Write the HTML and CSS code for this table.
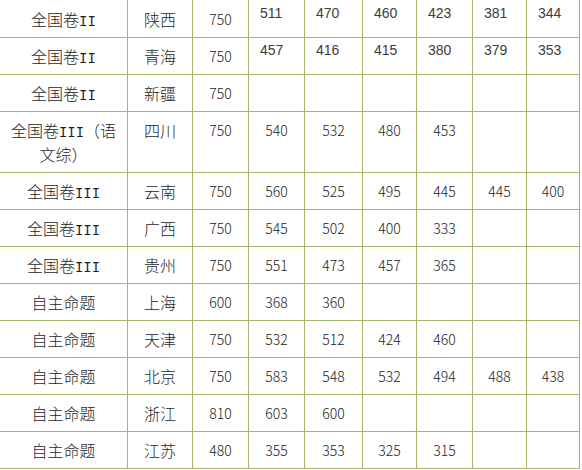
FILE: index.html
```html
<!DOCTYPE html>
<html lang="zh-CN">
<head>
<meta charset="utf-8">
<title>分数线</title>
<link rel="stylesheet" href="styles.css">
</head>
<body>
<table class="score">
  <colgroup>
    <col class="w1"><col class="w2"><col class="w3"><col class="w4"><col class="w5"><col class="w6"><col class="w7"><col class="w8"><col class="w9">
  </colgroup>
  <tbody>
    <tr class="first">
      <td>全国卷<span class="lat">II</span></td><td>陕西</td><td class="n">750</td>
      <td class="a">511</td><td class="a">470</td><td class="a">460</td><td class="a">423</td><td class="a">381</td><td class="a">344</td>
    </tr>
    <tr>
      <td>全国卷<span class="lat">II</span></td><td>青海</td><td class="n">750</td>
      <td class="a">457</td><td class="a">416</td><td class="a">415</td><td class="a">380</td><td class="a">379</td><td class="a">353</td>
    </tr>
    <tr>
      <td>全国卷<span class="lat">II</span></td><td>新疆</td><td class="n">750</td>
      <td></td><td></td><td></td><td></td><td></td><td></td>
    </tr>
    <tr>
      <td>全国卷<span class="lat">III</span>（语文综）</td><td>四川</td><td class="n">750</td>
      <td class="n">540</td><td class="n">532</td><td class="n">480</td><td class="n">453</td><td></td><td></td>
    </tr>
    <tr>
      <td>全国卷<span class="lat">III</span></td><td>云南</td><td class="n">750</td>
      <td class="n">560</td><td class="n">525</td><td class="n">495</td><td class="n">445</td><td class="n">445</td><td class="n">400</td>
    </tr>
    <tr>
      <td>全国卷<span class="lat">III</span></td><td>广西</td><td class="n">750</td>
      <td class="n">545</td><td class="n">502</td><td class="n">400</td><td class="n">333</td><td></td><td></td>
    </tr>
    <tr>
      <td>全国卷<span class="lat">III</span></td><td>贵州</td><td class="n">750</td>
      <td class="n">551</td><td class="n">473</td><td class="n">457</td><td class="n">365</td><td></td><td></td>
    </tr>
    <tr>
      <td>自主命题</td><td>上海</td><td class="n">600</td>
      <td class="n">368</td><td class="n">360</td><td></td><td></td><td></td><td></td>
    </tr>
    <tr>
      <td>自主命题</td><td>天津</td><td class="n">750</td>
      <td class="n">532</td><td class="n">512</td><td class="n">424</td><td class="n">460</td><td></td><td></td>
    </tr>
    <tr>
      <td>自主命题</td><td>北京</td><td class="n">750</td>
      <td class="n">583</td><td class="n">548</td><td class="n">532</td><td class="n">494</td><td class="n">488</td><td class="n">438</td>
    </tr>
    <tr>
      <td>自主命题</td><td>浙江</td><td class="n">810</td>
      <td class="n">603</td><td class="n">600</td><td></td><td></td><td></td><td></td>
    </tr>
    <tr>
      <td>自主命题</td><td>江苏</td><td class="n">480</td>
      <td class="n">355</td><td class="n">353</td><td class="n">325</td><td class="n">315</td><td></td><td></td>
    </tr>
  </tbody>
</table>
</body>
</html>
```
FILE: styles.css
```css
html, body {
  margin: 0;
  padding: 0;
  background: #ffffff;
}

.score {
  border-collapse: collapse;
  table-layout: fixed;
  width: 581px;
  margin: -1px 0 0 -1px;
}

.w1 { width: 128px; }
.w2 { width: 65px; }
.w3 { width: 56px; }
.w4 { width: 56px; }
.w5 { width: 58px; }
.w6 { width: 54px; }
.w7 { width: 56px; }
.w8 { width: 54px; }
.w9 { width: 53px; }

.score td {
  border: 1px solid #a3b96a;
  padding: 6px 8px;
  line-height: 24px;
  font-family: "Noto Sans CJK SC", sans-serif;
  font-weight: 300;
  font-size: 16px;
  color: #1e1e1e;
  text-align: center;
  vertical-align: top;
  overflow: hidden;
}

.score .first td {
  padding-top: 7px;
}

.lat {
  font-family: "Liberation Mono", "DejaVu Sans Mono", monospace;
  font-weight: 400;
  font-size: 14px;
  line-height: 1;
}

.score td.n {
  font-family: "Noto Sans CJK SC", sans-serif;
  font-weight: 300;
  font-size: 14px;
  color: #222222;
  padding-left: 0;
  padding-right: 0;
}

.score td.a {
  font-family: "Liberation Sans", Arial, sans-serif;
  font-weight: 400;
  font-size: 14px;
  color: #3c3c3c;
  text-align: left;
  padding: 0 0 12px 11px;
}

.score .first td.a {
  padding-top: 1px;
  padding-bottom: 12px;
}
```
